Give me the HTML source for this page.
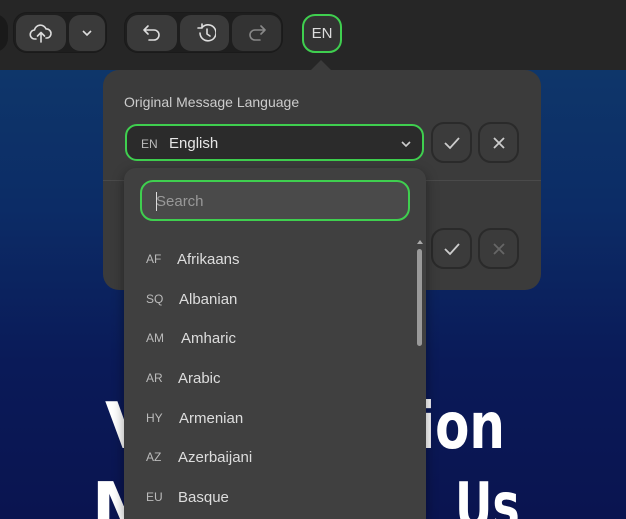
<!DOCTYPE html>
<html><head><meta charset="utf-8"><style>
*{box-sizing:border-box;margin:0;padding:0}
html,body{width:626px;height:519px;overflow:hidden}
body{position:relative;font-family:"Liberation Sans",sans-serif;background:linear-gradient(180deg,#0f3b6c 0%,#0c2c66 40%,#0a1a58 70%,#0a1450 100%)}
.top{position:absolute;left:0;top:0;width:626px;height:70px;background:#262626}
.grp{position:absolute;top:12px;height:41px;background:#1e1e1e;border-radius:14px;border:1px solid #1a1a1a}
.b{position:absolute;top:2px;height:36px;background:#3a3a3a;border-radius:11px;display:flex;align-items:center;justify-content:center}
.abs{position:absolute}
.big{position:absolute;color:#fff;font-weight:bold;font-size:64px;letter-spacing:3px;font-family:"DejaVu Sans",sans-serif;white-space:nowrap;transform-origin:left top}
.pop{position:absolute;left:103px;top:70px;width:438px;height:220px;background:#3b3b3b;border-radius:16px}
.sq{position:absolute;width:41px;height:41px;border-radius:13px;border:2px solid #2a2a2a;display:flex;align-items:center;justify-content:center}
.list{position:absolute;left:124px;top:168px;width:302px;height:351px;background:#404040;border-radius:12px 12px 0 0;box-shadow:0 4px 12px rgba(0,0,0,.4)}
.it{position:absolute;left:0;height:20px;color:#ddd;font-size:15px}
.it span{position:absolute;left:22px;top:3px;font-size:12px;color:#bbb}
.it b{font-weight:normal;position:absolute;top:2px}
</style></head><body>
<div class="big" style="left:105px;top:390px">V</div>
<div class="big" style="left:418px;top:390px;letter-spacing:0;transform:scaleX(0.78)">ion</div>
<div class="big" style="left:92px;top:470px">M</div>
<div class="big" style="left:455px;top:470px;letter-spacing:0;transform:scaleX(0.72)">Us</div>
<div class="top"></div>
<div class="abs" style="left:-20px;top:14px;width:28px;height:38px;border-radius:14px;background:#1a1a1a"></div>
<div class="grp" style="left:13px;width:94px">
 <div class="b" style="left:2px;width:50px"><svg width="24" height="22" viewBox="0 0 24 22" fill="none" stroke="#ddd" stroke-width="1.6" stroke-linecap="round" stroke-linejoin="round"><path d="M7 17H6a4.5 4.5 0 0 1-.5-9A6 6 0 0 1 17 7a4.5 4.5 0 0 1 1 9h-1"/><path d="M12 20v-9M8.5 14l3.5-3.5 3.5 3.5"/></svg></div>
 <div class="b" style="left:55px;width:36px"><svg width="12" height="8" viewBox="0 0 12 8" fill="none" stroke="#ddd" stroke-width="1.6"><path d="M2 2l4 4 4-4"/></svg></div>
</div>
<div class="grp" style="left:124px;width:159px">
 <div class="b" style="left:2px;width:50px"><svg width="20" height="18" viewBox="0 0 20 18" fill="none" stroke="#ddd" stroke-width="1.6" stroke-linecap="round" stroke-linejoin="round"><path d="M6 2L2 6l4 4M2 6h10a5 5 0 0 1 0 10H7"/></svg></div>
 <div class="b" style="left:55px;width:49px"><svg width="22" height="20" viewBox="0 0 22 20" fill="none" stroke="#ddd" stroke-width="1.6" stroke-linecap="round" stroke-linejoin="round"><path d="M4 10a8 8 0 1 0 2.5-6M2 5l4 0 0-4" transform="translate(2,0)"/><path d="M13 6v5l3 2"/></svg></div>
 <div class="b" style="left:107px;width:49px;background:#333"><svg width="20" height="18" viewBox="0 0 20 18" fill="none" stroke="#888" stroke-width="1.6" stroke-linecap="round" stroke-linejoin="round"><path d="M14 2l4 4-4 4M18 6H8a5 5 0 0 0 0 10h5"/></svg></div>
</div>
<div class="abs" style="left:302px;top:14px;width:40px;height:39px;border:2px solid #3fcf4f;border-radius:13px;background:#333;color:#ddd;font-size:15px;display:flex;align-items:center;justify-content:center">EN</div>
<div class="abs" style="left:311px;top:60px;width:0;height:0;border-left:10px solid transparent;border-right:10px solid transparent;border-bottom:10px solid #3b3b3b"></div>
<div class="pop">
 <div class="abs" style="left:21px;top:24px;color:#ccc;font-size:14px">Original Message Language</div>
 <div class="abs" style="left:22px;top:54px;width:299px;height:37px;border:2px solid #3fcf4f;border-radius:12px;background:#2b2b2b">
  <span class="abs" style="left:14px;top:11px;font-size:12px;color:#bbb">EN</span>
  <span class="abs" style="left:42px;top:9px;font-size:15px;color:#e6e6e6">English</span>
  <svg class="abs" style="left:273px;top:14px" width="12" height="8" viewBox="0 0 12 8" fill="none" stroke="#ccc" stroke-width="1.6"><path d="M2 2l4 4 4-4"/></svg>
 </div>
 <div class="sq" style="left:328px;top:52px"><svg width="20" height="16" viewBox="0 0 20 16" fill="none" stroke="#ccc" stroke-width="1.8"><path d="M3 8l5 5 9-10"/></svg></div>
 <div class="sq" style="left:375px;top:52px"><svg width="14" height="14" viewBox="0 0 14 14" fill="none" stroke="#ccc" stroke-width="1.8"><path d="M2 2l10 10M12 2L2 12"/></svg></div>
 <div class="abs" style="left:0;top:110px;width:438px;height:1px;background:#4a4a4a"></div>
 <div class="sq" style="left:328px;top:158px"><svg width="20" height="16" viewBox="0 0 20 16" fill="none" stroke="#ccc" stroke-width="1.8"><path d="M3 8l5 5 9-10"/></svg></div>
 <div class="sq" style="left:375px;top:158px"><svg width="14" height="14" viewBox="0 0 14 14" fill="none" stroke="#666" stroke-width="1.8"><path d="M2 2l10 10M12 2L2 12"/></svg></div>
</div>
<div class="list">
 <div class="abs" style="left:16px;top:12px;width:270px;height:41px;border:2px solid #3fcf4f;border-radius:13px;background:#4a4a4a">
  <span class="abs" style="left:14px;top:11px;font-size:15px;color:#999">Search</span>
  <span class="abs" style="left:14px;top:10px;width:1px;height:19px;background:#ddd"></span>
 </div>
 <div class="abs" style="left:293px;top:72px;width:0;height:0;border-left:3px solid transparent;border-right:3px solid transparent;border-bottom:4px solid #aaa"></div>
 <div class="abs" style="left:293px;top:81px;width:5px;height:97px;border-radius:3px;background:#9a9a9a"></div>
 <div class="it" style="top:81px"><span>AF</span><b style="left:53px">Afrikaans</b></div>
 <div class="it" style="top:121px"><span>SQ</span><b style="left:55px">Albanian</b></div>
 <div class="it" style="top:160px"><span>AM</span><b style="left:57px">Amharic</b></div>
 <div class="it" style="top:200px"><span>AR</span><b style="left:54px">Arabic</b></div>
 <div class="it" style="top:240px"><span>HY</span><b style="left:55px">Armenian</b></div>
 <div class="it" style="top:279px"><span>AZ</span><b style="left:54px">Azerbaijani</b></div>
 <div class="it" style="top:319px"><span>EU</span><b style="left:54px">Basque</b></div>
</div>
</body></html>
